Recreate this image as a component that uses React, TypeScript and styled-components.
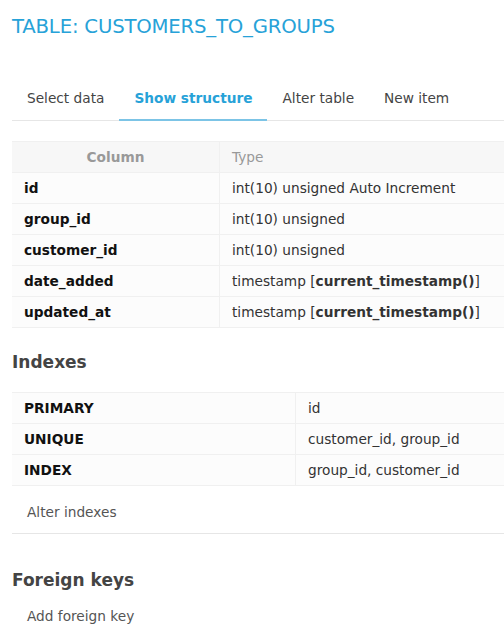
import React from 'react';
import styled, { createGlobalStyle } from 'styled-components';

const Global = createGlobalStyle`
  body {
    margin: 0;
    background: #fff;
    font-family: "DejaVu Sans", Verdana, sans-serif;
    font-size: 13.7px;
    color: #222;
    overflow: hidden;
  }
`;

const Page = styled.div`
  padding: 12px 0 0 12px;
  width: 600px;
`;

const Title = styled.h1`
  margin: 3px 0 0;
  font-family: "DejaVu Sans", Verdana, sans-serif;
  font-weight: normal;
  font-size: 19.7px;
  color: #27a2d8;
  letter-spacing: -0.2px;
`;

const Tabs = styled.div`
  display: flex;
  margin-top: 43px;
  border-bottom: 1px solid #e6e6e6;
`;

const Tab = styled.div<{ $active?: boolean }>`
  padding: 9px 15px 13px;
  color: ${(p) => (p.$active ? '#27a2d8' : '#444')};
  font-weight: ${(p) => (p.$active ? 'bold' : 'normal')};
  border-bottom: 2px solid ${(p) => (p.$active ? '#7cc4e6' : 'transparent')};
  margin-bottom: -1px;
`;

const Table = styled.table`
  border-collapse: collapse;
  table-layout: fixed;
  width: 560px;
  margin-top: 20px;
  background: #fcfcfc;
`;

const Th = styled.th<{ $w?: number }>`
  height: 30px;
  padding: 0 12px;
  font-weight: ${(p) => (p.$w ? 'bold' : 'normal')};
  text-align: ${(p) => (p.$w ? 'center' : 'left')};
  width: ${(p) => (p.$w ? `${p.$w}px` : 'auto')};
  color: #999;
  background: #f7f7f7;
  border: 1px solid #f0f0f0;
  border-left: none;
`;

const Td = styled.td<{ $key?: boolean; $w?: number }>`
  height: 30px;
  padding: 0 12px;
  font-weight: ${(p) => (p.$key ? 'bold' : 'normal')};
  color: ${(p) => (p.$key ? '#111' : '#333')};
  width: ${(p) => (p.$w ? `${p.$w}px` : 'auto')};
  border-bottom: 1px solid #f0f0f0;
  border-right: 1px solid #f0f0f0;
  white-space: nowrap;
`;

const Heading = styled.h2`
  margin: 24px 0 0;
  font-size: 17px;
  font-weight: bold;
  color: #444;
`;

const LinkRow = styled.div<{ $line?: boolean }>`
  padding: 18px 15px 13px;
  color: #555;
  border-bottom: ${(p) => (p.$line ? '1px solid #e6e6e6' : 'none')};
`;

const cols = [
  ['id', 'int(10) unsigned Auto Increment'],
  ['group_id', 'int(10) unsigned'],
  ['customer_id', 'int(10) unsigned'],
  ['date_added', 'ts'],
  ['updated_at', 'ts'],
];

const indexes = [
  ['PRIMARY', 'id'],
  ['UNIQUE', 'customer_id, group_id'],
  ['INDEX', 'group_id, customer_id'],
];

export default function App() {
  return (
    <Page>
      <Global />
      <Title>TABLE: CUSTOMERS_TO_GROUPS</Title>
      <Tabs>
        <Tab>Select data</Tab>
        <Tab $active>Show structure</Tab>
        <Tab>Alter table</Tab>
        <Tab>New item</Tab>
      </Tabs>
      <Table>
        <thead>
          <tr>
            <Th $w={183}>Column</Th>
            <Th>Type</Th>
          </tr>
        </thead>
        <tbody>
          {cols.map(([n, t]) => (
            <tr key={n}>
              <Td $key $w={183}>{n}</Td>
              <Td>
                {t === 'ts' ? (
                  <>
                    timestamp [<b>current_timestamp()</b>]
                  </>
                ) : (
                  t
                )}
              </Td>
            </tr>
          ))}
        </tbody>
      </Table>
      <Heading>Indexes</Heading>
      <Table>
        <tbody>
          {indexes.map(([n, c], i) => (
            <tr key={n} style={i === 0 ? { borderTop: '1px solid #f0f0f0' } : undefined}>
              <Td $key $w={259}>{n}</Td>
              <Td>{c}</Td>
            </tr>
          ))}
        </tbody>
      </Table>
      <LinkRow $line>Alter indexes</LinkRow>
      <Heading style={{ marginTop: 36 }}>Foreign keys</Heading>
      <LinkRow>Add foreign key</LinkRow>
    </Page>
  );
}
